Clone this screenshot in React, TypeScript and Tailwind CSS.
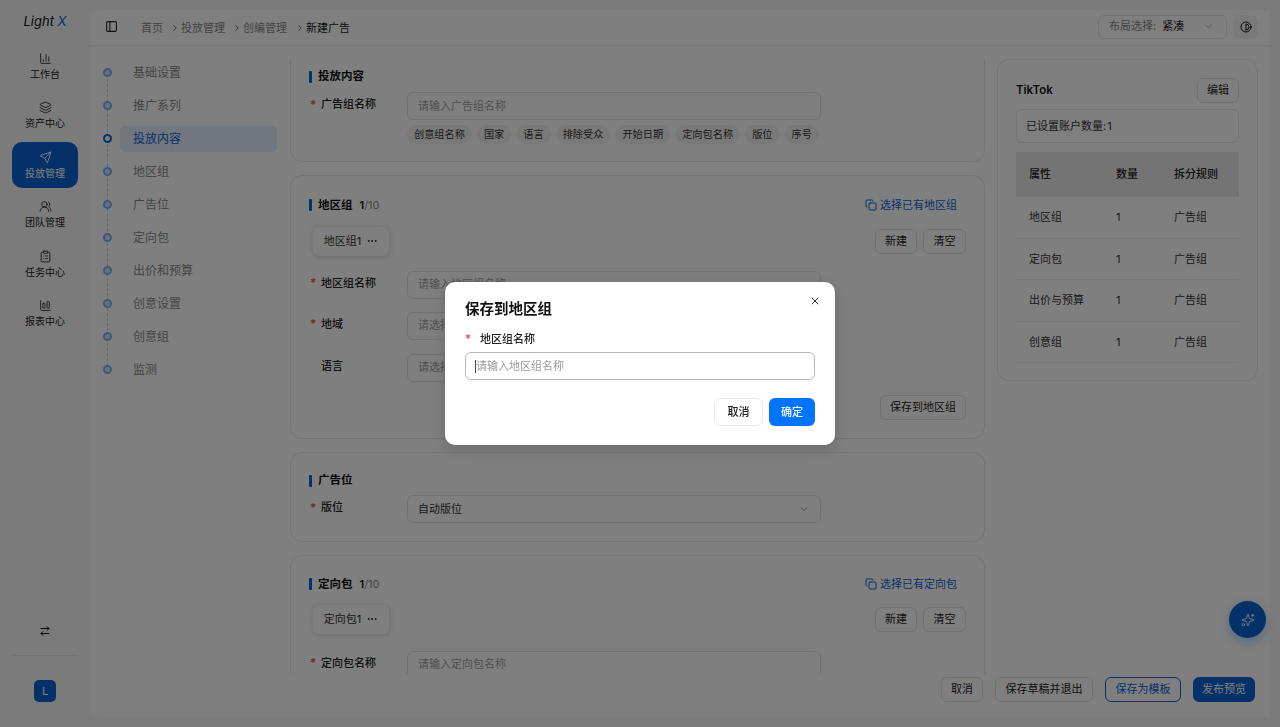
import {
  ArrowRightLeft,
  ChartColumn,
  ChartColumnBig,
  ChevronDown,
  ChevronRight,
  ClipboardList,
  Contrast,
  Copy,
  Ellipsis,
  Layers,
  PanelLeft,
  Send,
  Sparkles,
  UsersRound,
  X,
} from "lucide-react";

const sideItems = [
  { label: "工作台", icon: ChartColumn },
  { label: "资产中心", icon: Layers },
  { label: "投放管理", icon: Send, active: true },
  { label: "团队管理", icon: UsersRound },
  { label: "任务中心", icon: ClipboardList },
  { label: "报表中心", icon: ChartColumnBig },
];

const steps = ["基础设置", "推广系列", "投放内容", "地区组", "广告位", "定向包", "出价和预算", "创意设置", "创意组", "监测"];
const chips = ["创意组名称", "国家", "语言", "排除受众", "开始日期", "定向包名称", "版位", "序号"];
const rows = [
  ["地区组", "1", "广告组"],
  ["定向包", "1", "广告组"],
  ["出价与预算", "1", "广告组"],
  ["创意组", "1", "广告组"],
];

function Btn({ children, className = "" }: { children: React.ReactNode; className?: string }) {
  return (
    <button className={`h-[25px] shrink-0 whitespace-nowrap rounded-md border text-[11px] flex items-center justify-center ${className}`}>
      {children}
    </button>
  );
}

const plain = "border-[#e4e4e4] bg-white text-[#1c1c1c]";

function Title({ text, count }: { text: string; count?: boolean }) {
  return (
    <div className="flex items-center h-[14px]">
      <span className="w-[3px] h-[12px] bg-[#0a62d2] rounded-[1px]" />
      <span className="ml-[6px] text-[11.5px] font-semibold text-[#111]">{text}</span>
      {count && (
        <span className="ml-[7px] text-[11px] text-[#888]">
          <b className="text-[#111] font-semibold">1</b>/10
        </span>
      )}
    </div>
  );
}

function Field({ label, star = true, placeholder, arrow, className = "" }: { label: string; star?: boolean; placeholder: string; arrow?: boolean; className?: string }) {
  return (
    <div className={`flex items-start ${className}`}>
      <div className="w-[98px] flex items-center h-[25px] shrink-0 text-[11px] font-medium text-[#222]">
        <span className="w-[12px] text-[#e5484d] text-[12px] pl-[1px]">{star ? "*" : ""}</span>
        {label}
      </div>
      <div className={`w-[414px] h-[28px] rounded-md border border-[#e5e5e5] bg-white flex items-center justify-between pl-[10px] pr-[10px] text-[11px] ${arrow ? "text-[#333]" : "text-[#a0a0a0]"}`}>
        {placeholder}
        {arrow && <ChevronDown size={12} className="text-[#999]" />}
      </div>
    </div>
  );
}

function TabBar({ name, top }: { name: string; top: string }) {
  return (
    <div className={`flex items-center justify-between ${top}`}>
      <div className="ml-[4px] w-[76px] h-[29px] rounded-md bg-white shadow-[0_1px_6px_rgba(0,0,0,0.16)] flex items-center justify-center gap-[5px] text-[11px] text-[#333]">
        {name}
        <Ellipsis size={12} className="text-[#222]" />
      </div>
      <div className="flex gap-[6px]">
        <Btn className={`w-[42px] ${plain}`}>新建</Btn>
        <Btn className={`w-[43px] ${plain}`}>清空</Btn>
      </div>
    </div>
  );
}

function PickLink({ text }: { text: string }) {
  return (
    <div className="flex items-center gap-[3px] text-[11px] text-[#0a62d2]">
      <Copy size={12} />
      {text}
    </div>
  );
}

export default function App() {
  return (
    <div className="h-screen w-screen overflow-hidden bg-[#f7f7f7] flex font-['Inter','Noto_Sans_CJK_SC',sans-serif]">
      <aside className="w-[90px] shrink-0 flex flex-col px-[12px]">
        <div className="h-[43px] pt-[13px] text-center text-[13px] italic text-[#111] leading-4">
          Light <span className="text-[#0a62d2]">X</span>
        </div>
        <nav className="flex flex-col gap-[3.6px]">
          {sideItems.map((item) => (
            <div
              key={item.label}
              className={`h-[46px] rounded-[10px] flex flex-col items-center justify-center gap-[2px] text-[10px] leading-[14px] ${
                item.active ? "bg-[#0a62d2] text-white" : "text-[#222]"
              }`}
            >
              <item.icon size={13} strokeWidth={1.6} />
              {item.label}
            </div>
          ))}
        </nav>
        <div className="mt-auto flex flex-col items-center">
          <ArrowRightLeft size={12} className="text-[#111]" />
          <div className="w-full h-px bg-[#e6e6e6] mt-[18px] mb-[24px]" />
          <div className="w-[22px] h-[22px] mb-[25px] rounded-[5px] bg-[#0a62d2] text-white text-[11px] flex items-center justify-center">L</div>
        </div>
      </aside>

      <main className="w-[1180px] my-[10px] bg-white rounded-l-[12px] flex flex-col overflow-hidden">
        <header className="h-[36px] shrink-0 border-b border-[#eeeeee] flex items-center pl-[15px] pr-[12px] text-[11px] text-[#888] pb-[2px]">
          <PanelLeft size={13} className="text-[#222]" />
          <div className="ml-[23px] pt-[3px] flex items-center">
            首页
            <ChevronRight size={10} className="ml-[7px] mr-[1px] text-[#555]" />
            投放管理
            <ChevronRight size={10} className="ml-[7px] mr-[1px] text-[#555]" />
            创编管理
            <ChevronRight size={10} className="ml-[8px] mr-[1px] text-[#555]" />
            <span className="text-[#222]">新建广告</span>
          </div>
          <div className="ml-auto flex items-center gap-[7px]">
            <div className="w-[129px] h-[24px] rounded-md border border-[#e8e8e8] flex items-center pl-[10px] pr-[12px]">
              布局选择:
              <span className="ml-[6px] text-[#222]">紧凑</span>
              <ChevronDown size={11} className="ml-auto text-[#aaa]" />
            </div>
            <div className="w-[24px] h-[24px] rounded-md bg-[#f4f4f4] flex items-center justify-center">
              <Contrast size={12} className="text-[#111]" />
            </div>
          </div>
        </header>

        <div className="flex-1 min-h-0 flex">
          <div className="w-[200px] shrink-0 pt-[10px] pl-[13px] relative">
            <div className="absolute left-[16.5px] top-[23px] h-[297px] border-l border-dashed border-[#b8cdf0]" />
            {steps.map((s) => {
              const on = s === "投放内容";
              return (
                <div key={s} className="h-[33px] flex items-center relative">
                  <span className={`w-[9px] h-[9px] -ml-[0.5px] shrink-0 rounded-full border-[2.5px] ${on ? "bg-white border-[#0a62d2]" : "bg-[#d4e2f8] border-[#7fb0f5]"}`} />
                  <span className={`ml-[8.5px] w-[157px] h-[26px] pl-[13px] rounded-[5px] flex items-center text-[12px] ${on ? "bg-[#e4efff] text-[#0a62d2]" : "text-[#888]"}`}>{s}</span>
                </div>
              );
            })}
          </div>

          <div className="w-[695px] shrink-0 mt-[13px] overflow-hidden flex flex-col gap-[13px]">
            <section className="shrink-0 h-[123px] -mt-[20px] border border-[#e8e8e8] rounded-[12px] pt-[30px] px-[18px]">
              <Title text="投放内容" />
              <Field label="广告组名称" placeholder="请输入广告组名称" className="mt-[8px]" />
              <div className="ml-[98px] mt-[5px] flex gap-[5px]">
                {chips.map((c) => (
                  <span key={c} className="h-[19px] px-[7px] rounded-full bg-[#f3f3f3] text-[10.2px] text-[#333] flex items-center">{c}</span>
                ))}
              </div>
            </section>

            <section className="shrink-0 h-[264px] border border-[#e8e8e8] rounded-[12px] pt-[21px] pl-[18px] pr-[18px]">
              <div className="flex items-center justify-between pr-[9px]">
                <Title text="地区组" count />
                <PickLink text="选择已有地区组" />
              </div>
              <TabBar name="地区组1" top="mt-[13px]" />
              <Field label="地区组名称" placeholder="请输入地区组名称" className="mt-[15px]" />
              <Field label="地域" placeholder="请选择地域" className="mt-[13px]" />
              <Field label="语言" star={false} placeholder="请选择语言" className="mt-[14px]" />
              <div className="flex justify-end mt-[13px]">
                <Btn className={`w-[86px] ${plain}`}>保存到地区组</Btn>
              </div>
            </section>

            <section className="shrink-0 h-[90px] border border-[#e8e8e8] rounded-[12px] pt-[21px] px-[18px]">
              <Title text="广告位" />
              <Field label="版位" placeholder="自动版位" arrow className="mt-[7px]" />
            </section>

            <section className="shrink-0 h-[200px] border border-[#e8e8e8] rounded-[12px] pt-[20px] px-[18px]">
              <div className="flex items-center justify-between pr-[9px]">
                <Title text="定向包" count />
                <PickLink text="选择已有定向包" />
              </div>
              <TabBar name="定向包1" top="mt-[12px]" />
              <Field label="定向包名称" placeholder="请输入定向包名称" className="mt-[17px]" />
            </section>
          </div>

          <div className="ml-[12px] mt-[13px] w-[261px] h-[322px] shrink-0 border border-[#e8e8e8] rounded-[12px] pt-[18px] px-[18px]">
            <div className="flex items-center justify-between">
              <span className="text-[11.5px] font-semibold text-[#111]">TikTok</span>
              <Btn className={`w-[42px] ${plain}`}>编辑</Btn>
            </div>
            <div className="mt-[6px] h-[34px] border border-[#e8e8e8] rounded-md flex items-center pl-[9px] text-[11px] text-[#333]">已设置账户数量:<span className="ml-[1px]">1</span></div>
            <div className="mt-[9px] text-[11px] text-[#333]">
              <div className="h-[45px] bg-[#e8e8e8] grid grid-cols-[87px_58px_1fr] items-center pl-[13px] font-medium text-[#222]">
                <span>属性</span>
                <span>数量</span>
                <span>拆分规则</span>
              </div>
              {rows.map((r) => (
                <div key={r[0]} className="h-[41.5px] border-b border-[#eeeeee] grid grid-cols-[87px_58px_1fr] items-center pl-[13px]">
                  {r.map((c, i) => (
                    <span key={i}>{c}</span>
                  ))}
                </div>
              ))}
            </div>
          </div>
        </div>

        <footer className="h-[43px] shrink-0 flex items-start justify-end gap-[12px] pt-[3px] pr-[15px]">
          <Btn className={`w-[42px] ${plain}`}>取消</Btn>
          <Btn className={`w-[98px] ${plain}`}>保存草稿并退出</Btn>
          <Btn className="w-[76px] border-[#0a62d2] bg-white text-[#0a62d2]">保存为模板</Btn>
          <Btn className="w-[62px] border-[#0a62d2] bg-[#0a62d2] text-white">发布预览</Btn>
        </footer>
      </main>

      <div className="fixed left-[1229px] top-[601px] w-[37px] h-[37px] rounded-full bg-[#0a62d2] text-white flex items-center justify-center shadow-[0_4px_12px_rgba(14,124,255,0.35)]">
        <Sparkles size={14} strokeWidth={1.6} />
      </div>

      <div className="fixed inset-0 bg-black/50 flex items-center justify-center">
        <div className="relative w-[390px] h-[163px] bg-white rounded-[10px] pt-[18px] px-[20px] shadow-[0_4px_16px_rgba(0,0,0,0.18)]">
          <X size={12} className="absolute top-[13px] right-[14px] text-[#333]" />
          <h2 className="text-[14.5px] font-semibold leading-[18px] text-[#111]">保存到地区组</h2>
          <div className="mt-[14px] flex items-center h-[14px] text-[11px] font-medium text-[#222]">
            <span className="w-[15px] text-[#f04848] text-[12px]">*</span>
            地区组名称
          </div>
          <div className="mt-[6px] h-[28px] rounded-md border border-[#b8b8b8] flex items-center pl-[9px] text-[11px] text-[#999]">
            <span className="w-px h-[13px] bg-[#444]" />
            请输入地区组名称
          </div>
          <div className="mt-[18px] flex justify-end gap-[6px]">
            <button className="w-[49px] h-[28px] rounded-md border border-[#e8e8e8] text-[11px] font-medium text-[#222]">取消</button>
            <button className="w-[46px] h-[28px] rounded-md bg-[#0073ff] text-[11px] font-medium text-white">确定</button>
          </div>
        </div>
      </div>
    </div>
  );
}
